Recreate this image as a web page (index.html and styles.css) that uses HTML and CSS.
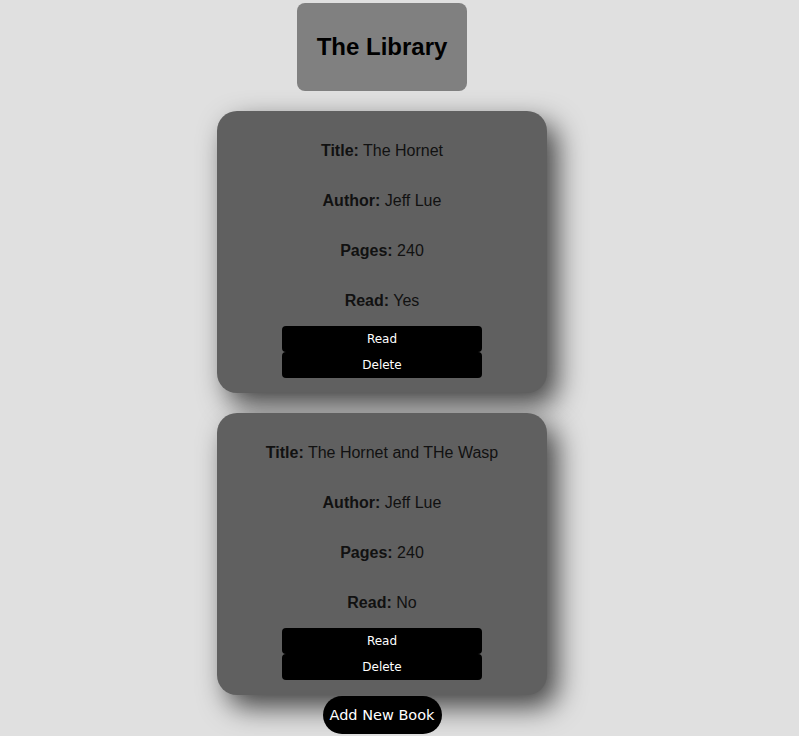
FILE: index.html
```html
<!DOCTYPE html>
<html>
<head>
<meta charset="utf-8">
<link rel="stylesheet" href="styles.css">
</head>
<body>
<div class="page">
  <header class="header"><h1>The Library</h1></header>
  <div class="card">
    <p><b>Title:</b> The Hornet</p>
    <p><b>Author:</b> Jeff Lue</p>
    <p><b>Pages:</b> 240</p>
    <p><b>Read:</b> Yes</p>
    <div class="actions">
      <button class="btn">Read</button>
      <button class="btn">Delete</button>
    </div>
  </div>
  <div class="card">
    <p><b>Title:</b> The Hornet and THe Wasp</p>
    <p><b>Author:</b> Jeff Lue</p>
    <p><b>Pages:</b> 240</p>
    <p><b>Read:</b> No</p>
    <div class="actions">
      <button class="btn">Read</button>
      <button class="btn">Delete</button>
    </div>
  </div>
  <button class="add">Add New Book</button>
</div>
</body>
</html>
```
FILE: styles.css
```css
html, body {
  margin: 0;
  height: 736px;
  overflow: hidden;
  background: #e0e0e0;
  font-family: "Liberation Sans", Arial, sans-serif;
}
.page {
  width: 764px;
  display: flex;
  flex-direction: column;
  align-items: center;
  padding-top: 3px;
}
.header {
  width: 170px;
  height: 88px;
  background: #808080;
  border-radius: 8px;
  display: flex;
  align-items: center;
  justify-content: center;
  margin-bottom: 20px;
}
.header h1 {
  margin: 0;
  font-size: 24px;
  font-weight: bold;
  color: #000;
}
.card {
  box-sizing: border-box;
  width: 330px;
  height: 282px;
  background: #606060;
  border-radius: 20px;
  box-shadow: 10px 12px 28px rgba(0,0,0,0.7);
  display: flex;
  flex-direction: column;
  align-items: center;
  padding-top: 31px;
  margin-bottom: 20px;
}
.card p {
  margin: 0 0 32px;
  font-size: 16px;
  line-height: 18px;
  color: #111;
}
.card p:nth-of-type(4) { margin-bottom: 16px; }
.actions {
  display: flex;
  flex-direction: column;
}
.btn {
  width: 200px;
  height: 26px;
  background: #000;
  color: #fff;
  border: none;
  border-radius: 4px;
  font-family: "DejaVu Sans", sans-serif;
  font-size: 12px;
  padding: 0;
}
.add {
  margin-top: -19px;
  width: 119px;
  height: 38px;
  border: none;
  border-radius: 19px;
  background: #000;
  color: #fff;
  font-family: "DejaVu Sans", sans-serif;
  font-size: 14.5px;
  padding: 0;
}
```
